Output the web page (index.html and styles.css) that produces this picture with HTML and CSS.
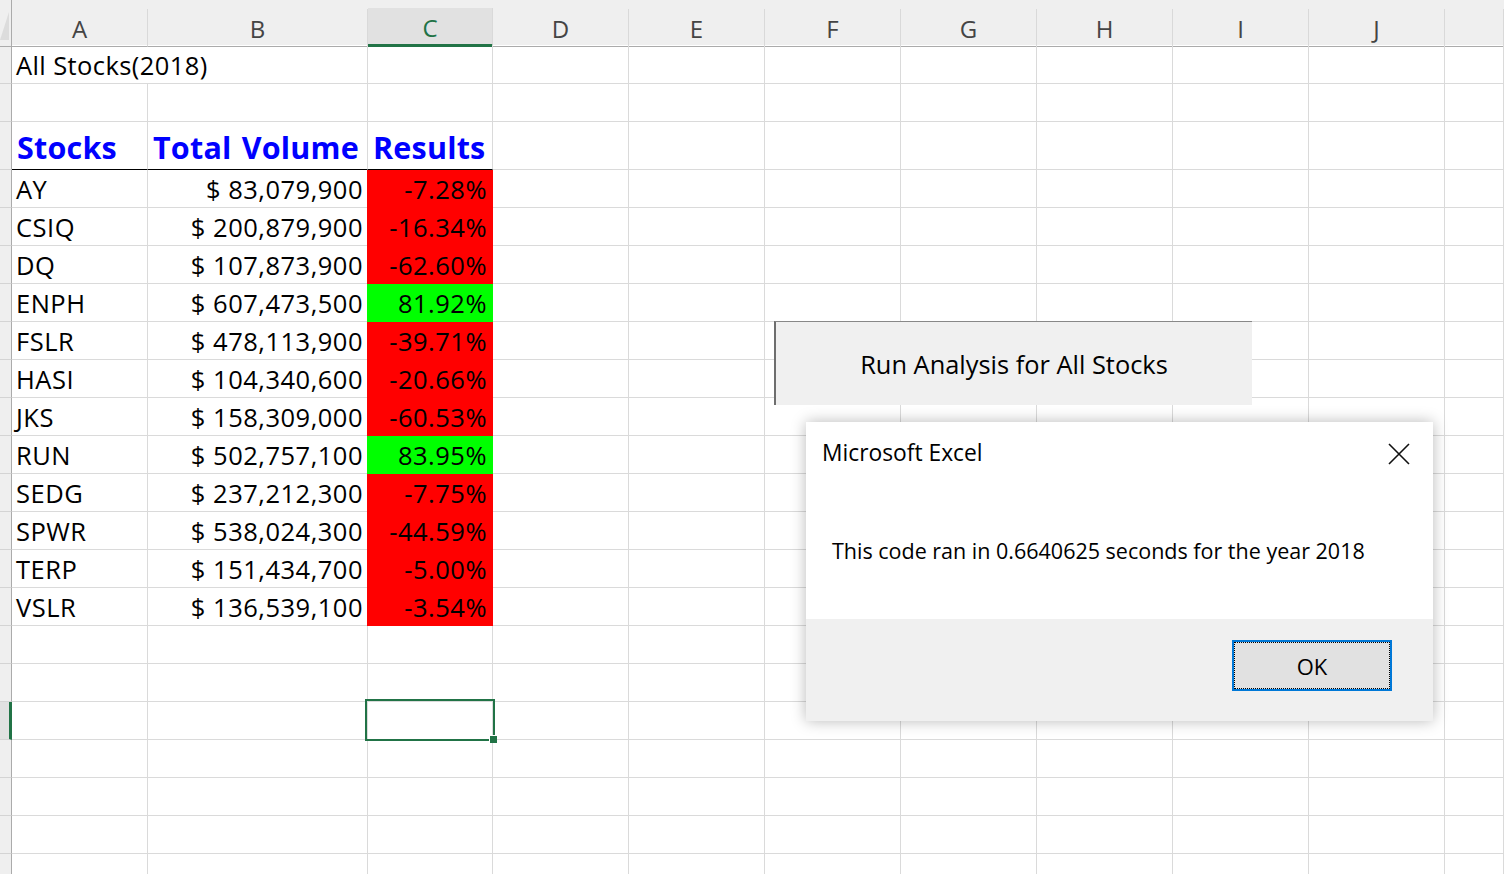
FILE: index.html
```html
<!DOCTYPE html>
<html>
<head>
<meta charset="utf-8">
<title>All Stocks(2018)</title>
<link rel="stylesheet" href="styles.css">
</head>
<body>
<div class="sheet">
  <div class="row head">
    <div class="corner"><span class="tri"></span></div>
    <div class="ch">A</div><div class="ch">B</div><div class="ch sel">C</div><div class="ch">D</div><div class="ch">E</div><div class="ch">F</div><div class="ch">G</div><div class="ch">H</div><div class="ch">I</div><div class="ch">J</div><div class="ch"></div>
  </div>
  <div class="row r1"><div class="rh"></div><div class="c t spill">All Stocks(2018)</div><div class="c"></div><div class="c"></div><div class="c"></div><div class="c"></div><div class="c"></div><div class="c"></div><div class="c"></div><div class="c"></div><div class="c"></div><div class="c"></div></div>
  <div class="row"><div class="rh"></div><div class="c"></div><div class="c"></div><div class="c"></div><div class="c"></div><div class="c"></div><div class="c"></div><div class="c"></div><div class="c"></div><div class="c"></div><div class="c"></div><div class="c"></div></div>
  <div class="row r3"><div class="rh"></div><div class="c h">Stocks</div><div class="c h">Total Volume</div><div class="c h">Results</div><div class="c"></div><div class="c"></div><div class="c"></div><div class="c"></div><div class="c"></div><div class="c"></div><div class="c"></div><div class="c"></div></div>
  <div class="row"><div class="rh"></div><div class="c t">AY</div><div class="c t num">$ 83,079,900</div><div class="c t num red">-7.28%</div><div class="c"></div><div class="c"></div><div class="c"></div><div class="c"></div><div class="c"></div><div class="c"></div><div class="c"></div><div class="c"></div></div>
  <div class="row"><div class="rh"></div><div class="c t">CSIQ</div><div class="c t num">$ 200,879,900</div><div class="c t num red">-16.34%</div><div class="c"></div><div class="c"></div><div class="c"></div><div class="c"></div><div class="c"></div><div class="c"></div><div class="c"></div><div class="c"></div></div>
  <div class="row"><div class="rh"></div><div class="c t">DQ</div><div class="c t num">$ 107,873,900</div><div class="c t num red">-62.60%</div><div class="c"></div><div class="c"></div><div class="c"></div><div class="c"></div><div class="c"></div><div class="c"></div><div class="c"></div><div class="c"></div></div>
  <div class="row"><div class="rh"></div><div class="c t">ENPH</div><div class="c t num">$ 607,473,500</div><div class="c t num green">81.92%</div><div class="c"></div><div class="c"></div><div class="c"></div><div class="c"></div><div class="c"></div><div class="c"></div><div class="c"></div><div class="c"></div></div>
  <div class="row"><div class="rh"></div><div class="c t">FSLR</div><div class="c t num">$ 478,113,900</div><div class="c t num red">-39.71%</div><div class="c"></div><div class="c"></div><div class="c"></div><div class="c"></div><div class="c"></div><div class="c"></div><div class="c"></div><div class="c"></div></div>
  <div class="row"><div class="rh"></div><div class="c t">HASI</div><div class="c t num">$ 104,340,600</div><div class="c t num red">-20.66%</div><div class="c"></div><div class="c"></div><div class="c"></div><div class="c"></div><div class="c"></div><div class="c"></div><div class="c"></div><div class="c"></div></div>
  <div class="row"><div class="rh"></div><div class="c t">JKS</div><div class="c t num">$ 158,309,000</div><div class="c t num red">-60.53%</div><div class="c"></div><div class="c"></div><div class="c"></div><div class="c"></div><div class="c"></div><div class="c"></div><div class="c"></div><div class="c"></div></div>
  <div class="row"><div class="rh"></div><div class="c t">RUN</div><div class="c t num">$ 502,757,100</div><div class="c t num green">83.95%</div><div class="c"></div><div class="c"></div><div class="c"></div><div class="c"></div><div class="c"></div><div class="c"></div><div class="c"></div><div class="c"></div></div>
  <div class="row"><div class="rh"></div><div class="c t">SEDG</div><div class="c t num">$ 237,212,300</div><div class="c t num red">-7.75%</div><div class="c"></div><div class="c"></div><div class="c"></div><div class="c"></div><div class="c"></div><div class="c"></div><div class="c"></div><div class="c"></div></div>
  <div class="row"><div class="rh"></div><div class="c t">SPWR</div><div class="c t num">$ 538,024,300</div><div class="c t num red">-44.59%</div><div class="c"></div><div class="c"></div><div class="c"></div><div class="c"></div><div class="c"></div><div class="c"></div><div class="c"></div><div class="c"></div></div>
  <div class="row"><div class="rh"></div><div class="c t">TERP</div><div class="c t num">$ 151,434,700</div><div class="c t num red">-5.00%</div><div class="c"></div><div class="c"></div><div class="c"></div><div class="c"></div><div class="c"></div><div class="c"></div><div class="c"></div><div class="c"></div></div>
  <div class="row"><div class="rh"></div><div class="c t">VSLR</div><div class="c t num">$ 136,539,100</div><div class="c t num red">-3.54%</div><div class="c"></div><div class="c"></div><div class="c"></div><div class="c"></div><div class="c"></div><div class="c"></div><div class="c"></div><div class="c"></div></div>
  <div class="row"><div class="rh"></div><div class="c"></div><div class="c"></div><div class="c"></div><div class="c"></div><div class="c"></div><div class="c"></div><div class="c"></div><div class="c"></div><div class="c"></div><div class="c"></div><div class="c"></div></div>
  <div class="row"><div class="rh"></div><div class="c"></div><div class="c"></div><div class="c"></div><div class="c"></div><div class="c"></div><div class="c"></div><div class="c"></div><div class="c"></div><div class="c"></div><div class="c"></div><div class="c"></div></div>
  <div class="row"><div class="rh active"></div><div class="c"></div><div class="c"></div><div class="c"></div><div class="c"></div><div class="c"></div><div class="c"></div><div class="c"></div><div class="c"></div><div class="c"></div><div class="c"></div><div class="c"></div></div>
  <div class="row"><div class="rh"></div><div class="c"></div><div class="c"></div><div class="c"></div><div class="c"></div><div class="c"></div><div class="c"></div><div class="c"></div><div class="c"></div><div class="c"></div><div class="c"></div><div class="c"></div></div>
  <div class="row"><div class="rh"></div><div class="c"></div><div class="c"></div><div class="c"></div><div class="c"></div><div class="c"></div><div class="c"></div><div class="c"></div><div class="c"></div><div class="c"></div><div class="c"></div><div class="c"></div></div>
  <div class="row"><div class="rh"></div><div class="c"></div><div class="c"></div><div class="c"></div><div class="c"></div><div class="c"></div><div class="c"></div><div class="c"></div><div class="c"></div><div class="c"></div><div class="c"></div><div class="c"></div></div>
  <div class="row"><div class="rh"></div><div class="c"></div><div class="c"></div><div class="c"></div><div class="c"></div><div class="c"></div><div class="c"></div><div class="c"></div><div class="c"></div><div class="c"></div><div class="c"></div><div class="c"></div></div>

  <div class="selection"><span class="handle"></span></div>

  <div class="macro-btn">Run Analysis for All Stocks</div>

  <div class="dialog">
    <div class="dlg-body">
      <div class="dlg-title">
        <span>Microsoft Excel</span>
        <svg class="close" width="22" height="22" viewBox="0 0 22 22"><path d="M1 1 L21 21 M21 1 L1 21" stroke="#111" stroke-width="1.6" fill="none"/></svg>
      </div>
      <div class="dlg-msg">This code ran in 0.6640625 seconds for the year 2018</div>
    </div>
    <div class="dlg-foot">
      <div class="ok">OK</div>
    </div>
  </div>
</div>
</body>
</html>
```

FILE: styles.css
```css
html, body {
  margin: 0;
  padding: 0;
  background: #fff;
}
body {
  font-family: "Open Sans", "Noto Sans", sans-serif;
  color: #000;
}
.sheet {
  position: relative;
  width: 1504px;
  height: 874px;
  overflow: hidden;
}
.row {
  display: grid;
  grid-template-columns: 12px 136px 220px 125px repeat(7, 136px) 1fr;
  height: 38px;
}
.row.head { height: 45px; background: #efefef; }
.row.r1 { height: 39px; }
.row.r3 { height: 48px; }

.corner {
  position: relative;
  border-right: 1px solid #ababab;
  border-bottom: 1px solid #ababab;
  box-sizing: border-box;
}
.tri {
  position: absolute;
  left: 0;
  top: 12px;
  width: 0;
  height: 0;
  border-left: 9px solid transparent;
  border-bottom: 28px solid #dcdcdc;
}
.ch {
  margin-top: 9px;
  box-sizing: border-box;
  border-right: 1px solid #d9d9d9;
  border-bottom: 1px solid #ababab;
  display: flex;
  align-items: center;
  justify-content: center;
  font-size: 24px;
  color: #444;
  padding-top: 1px;
}
.ch.sel {
  margin-top: 8px;
  background: #e1e1e1;
  color: #217346;
  border-bottom: 3px solid #217346;
  padding-top: 3px;
}

.rh {
  background: #efefef;
  box-sizing: border-box;
  border-right: 1px solid #ababab;
  border-bottom: 1px solid #d4d4d4;
}
.rh.active {
  background: #e1e1e1;
  border-right: 3px solid #217346;
}
.c {
  box-sizing: border-box;
  border-right: 1px solid #dadada;
  border-bottom: 1px solid #dadada;
  white-space: nowrap;
}
.t {
  display: flex;
  align-items: flex-end;
  font-size: 25.5px;
  letter-spacing: 0.5px;
  line-height: 30px;
  padding: 0 4px 3px 4px;
}
.spill { border-right: none; overflow: visible; padding-bottom: 3px; letter-spacing: 0.4px; }
.num { justify-content: flex-end; }
.red { background: #ff0000; border-color: #ff0000; box-shadow: -1px 0 0 #ff0000; padding-right: 5px; }
.green { background: #00ff00; border-color: #00ff00; box-shadow: -1px 0 0 #00ff00; padding-right: 5px; }

.h {
  display: flex;
  align-items: flex-end;
  font-size: 30.5px;
  font-weight: bold;
  letter-spacing: 0.2px;
  word-spacing: 2px;
  color: #0000ff;
  line-height: 36px;
  padding: 0 0 4px 5px;
  border-bottom-color: #000;
}

.selection {
  position: absolute;
  left: 365px;
  top: 699px;
  width: 130px;
  height: 42px;
  box-sizing: border-box;
  border: 2px solid #217346;
}
.handle {
  position: absolute;
  right: -4px;
  bottom: -4px;
  width: 7px;
  height: 7px;
  background: #217346;
  border: 1px solid #fff;
  border-right: none;
  border-bottom: none;
}

.macro-btn {
  position: absolute;
  left: 774px;
  top: 321px;
  width: 478px;
  height: 84px;
  box-sizing: border-box;
  background: #f0f0f0;
  border-left: 2px solid #6e6e6e;
  border-top: 1px solid #888;
  display: flex;
  align-items: center;
  justify-content: center;
  font-size: 25.4px;
  padding-top: 1px;
}

.dialog {
  position: absolute;
  left: 806px;
  top: 422px;
  width: 627px;
  height: 299px;
  background: #fff;
  box-shadow: 0 0 14px rgba(0, 0, 0, 0.28);
  display: flex;
  flex-direction: column;
}
.dlg-body {
  height: 197px;
  background: #fff;
}
.dlg-title {
  display: flex;
  justify-content: space-between;
  align-items: center;
  padding: 15px 23px 0 16px;
  font-size: 22.8px;
}
.close { margin-top: 2px; }
.dlg-msg {
  padding: 68px 0 0 26px;
  font-size: 21.5px;
}
.dlg-foot {
  flex: 1;
  background: #f0f0f0;
  display: flex;
  justify-content: flex-end;
  padding: 21px 41px 0 0;
  align-items: flex-start;
}
.ok {
  width: 160px;
  height: 51px;
  box-sizing: border-box;
  border: 2px solid #0078d7;
  background: #e1e1e1;
  outline: 1px dotted #000;
  outline-offset: -3px;
  display: flex;
  align-items: center;
  justify-content: center;
  font-size: 22px;
}
```
